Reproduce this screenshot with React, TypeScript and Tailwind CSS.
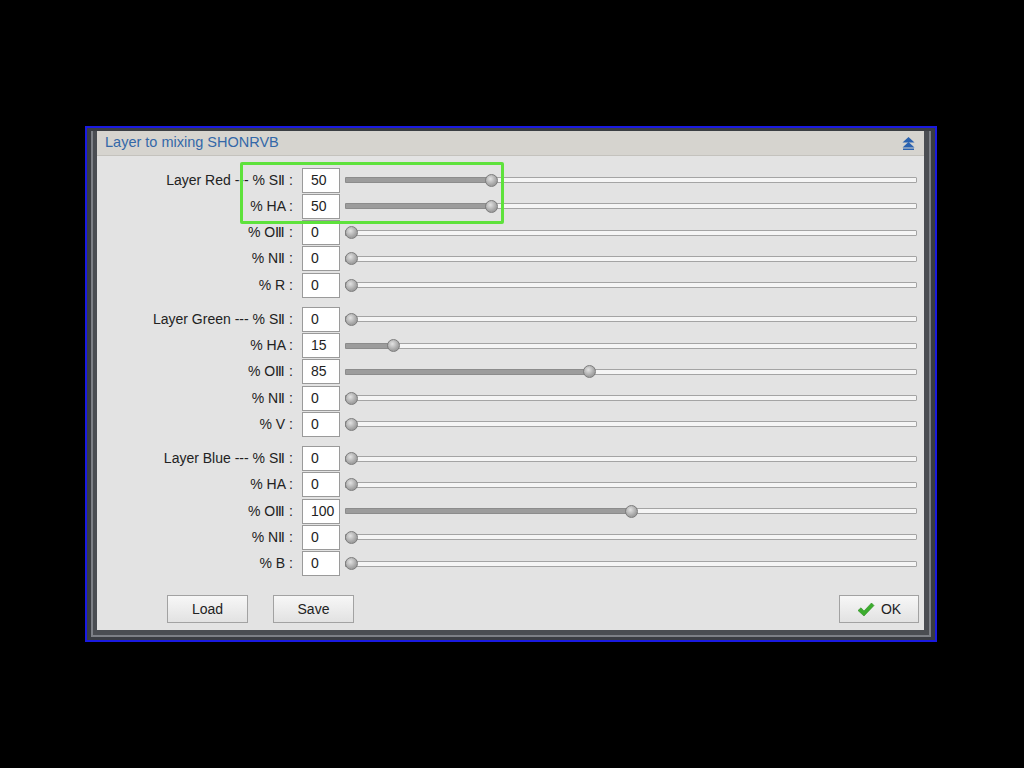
import React from "react"

type Row = { label: string; value: number }

const groups: Row[][] = [
  [
    { label: "Layer Red --- % SⅡ :", value: 50 },
    { label: "% HA :", value: 50 },
    { label: "% OⅢ :", value: 0 },
    { label: "% NⅡ :", value: 0 },
    { label: "% R :", value: 0 },
  ],
  [
    { label: "Layer Green --- % SⅡ :", value: 0 },
    { label: "% HA :", value: 15 },
    { label: "% OⅢ :", value: 85 },
    { label: "% NⅡ :", value: 0 },
    { label: "% V :", value: 0 },
  ],
  [
    { label: "Layer Blue --- % SⅡ :", value: 0 },
    { label: "% HA :", value: 0 },
    { label: "% OⅢ :", value: 100 },
    { label: "% NⅡ :", value: 0 },
    { label: "% B :", value: 0 },
  ],
]

const MAX = 200

function Slider({ value }: { value: number }) {
  const pct = value / MAX
  return (
    <div className="relative flex-1 h-[13px] flex items-center">
      <div className="w-full h-[6px] border border-[#a4a4a4] bg-[#f5f5f5] rounded-[1px]" />
      <div
        className="absolute left-0 h-[6px] bg-[#9c9c9c] border border-[#8c8c8c] rounded-[1px]"
        style={{ width: `calc(${pct} * (100% - 13px) + 6px)` }}
      />
      <div
        className="absolute top-0 w-[13px] h-[13px] rounded-full border border-[#7c7c7c] bg-[radial-gradient(circle_at_40%_35%,#e2e2e2,#a6a6a6_60%,#8a8a8a)]"
        style={{ left: `calc(${pct} * (100% - 13px))` }}
      />
    </div>
  )
}

function FieldRow({ row }: { row: Row }) {
  return (
    <div className="flex items-center h-[26.25px]">
      <div className="w-[198px] text-right pr-[2px] whitespace-nowrap">{row.label}</div>
      <div className="ml-[7px] w-[38px] h-[25px] bg-white border border-[#9a9a9a] flex items-center pl-[8px]">
        {row.value}
      </div>
      <div className="ml-[5px] mr-[7px] flex-1 flex">
        <Slider value={row.value} />
      </div>
    </div>
  )
}

function Button({ children, className = "" }: { children: React.ReactNode; className?: string }) {
  return (
    <button
      className={
        "h-[28px] border border-[#a2a2a2] bg-gradient-to-b from-[#f7f7f7] to-[#e2e2e2] flex items-center justify-center text-[#222] " +
        className
      }
    >
      {children}
    </button>
  )
}

export default function App() {
  return (
    <div
      className="min-h-screen bg-black pt-[126px] pl-[85px] text-[14px] text-[#222]"
      style={{ fontFamily: '"Liberation Sans", Arial, sans-serif' }}
    >
      <div className="w-[852px] h-[516px] border-2 border-[#1a1ae0] bg-[#3a3d42] pt-[3px] pl-[4px] pr-[4px] pb-[3px]">
        <div className="h-full border-l-[2px] border-r-[2px] border-b-[2px] border-[#7d8086] pl-[4px] pr-[5px] pb-[5px] bg-[#4a4d52]">
          <div className="relative h-full bg-[#e3e3e3] flex flex-col">
            {/* title bar */}
            <div className="h-[25px] bg-[#d6d4cf] border-b border-[#c4c2bd] flex items-center justify-between pl-[8px] pr-[9px]">
              <span className="text-[#3468a8] text-[14.5px]">Layer to mixing SHONRVB</span>
              <svg width="13" height="13" viewBox="0 0 13 13">
                <path d="M6.5 0 L12.5 5.5 L0.5 5.5 Z" fill="#2a62b0" />
                <path d="M6.5 5 L12.5 10.5 L0.5 10.5 Z" fill="#2a62b0" />
                <rect x="1" y="11.5" width="11" height="1.5" fill="#2a62b0" />
              </svg>
            </div>

            {/* rows */}
            <div className="pt-[11px] flex flex-col gap-[8px]">
              {groups.map((g, i) => (
                <div key={i} className="flex flex-col">
                  {g.map((r, j) => (
                    <FieldRow key={j} row={r} />
                  ))}
                </div>
              ))}
            </div>

            {/* buttons */}
            <div className="mt-auto pb-[7px] pl-[70px] pr-[5px] flex items-center">
              <Button className="w-[81px]">Load</Button>
              <Button className="w-[81px] ml-[25px]">Save</Button>
              <Button className="w-[80px] ml-auto gap-[6px]">
                <svg width="18" height="15" viewBox="0 0 18 15">
                  <path
                    d="M1 8.5 L4 5.8 L7 9 L14.5 1 L17 3.5 L7 14 Z"
                    fill="#3cad2e"
                    stroke="#2c8c22"
                    strokeWidth="0.6"
                    strokeLinejoin="round"
                  />
                </svg>
                <span>OK</span>
              </Button>
            </div>

            {/* green highlight */}
            <div className="absolute left-[143px] top-[31px] w-[264px] h-[62px] border-[3px] border-[#5ee23c] rounded-[2px] pointer-events-none" />
          </div>
        </div>
      </div>
    </div>
  )
}
